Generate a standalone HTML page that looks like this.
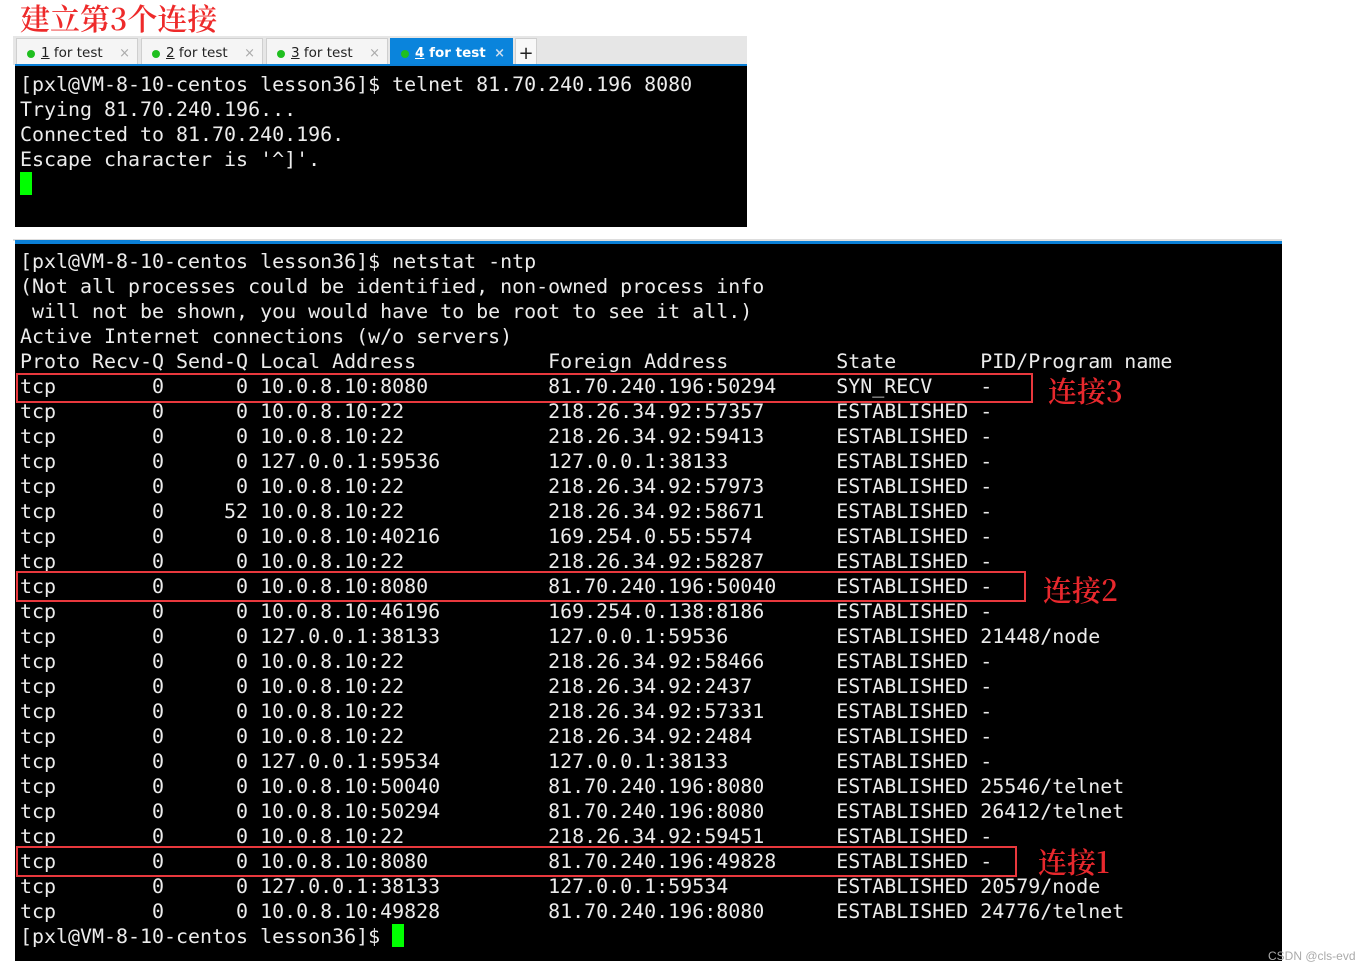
<!DOCTYPE html>
<html><head><meta charset="utf-8"><style>
body{margin:0;width:1372px;height:971px;background:#fff;position:relative;overflow:hidden}
.a{position:absolute}
pre{margin:0;font-family:"DejaVu Sans Mono",monospace;font-size:19.95px;line-height:25px;color:#ececec;white-space:pre}
.tab{position:absolute;top:38px;height:27px;background:#f5f5f5;border:1px solid #cfcfcf;border-bottom:none;box-sizing:border-box;font-family:"DejaVu Sans","Liberation Sans",sans-serif;font-size:13.5px;line-height:29px;color:#222}
.tab .d{position:absolute;left:10px;top:11px;width:8px;height:8px;border-radius:50%;background:#1fbf1f}
.tab .t{position:absolute;left:24px}
.tab .x{position:absolute;right:7px;color:#aaa;font-size:13px}
.red{position:absolute;border:2px solid #e8383d;box-sizing:border-box}
.ann{position:absolute;color:#e8282d;font-family:"Noto Serif CJK SC","Liberation Serif",serif;font-size:29px;line-height:32px;font-weight:600}
</style></head><body>
<div class="a" style="left:20px;top:-2px;color:#ee2a2a;font-family:'Noto Serif CJK SC','Liberation Serif',serif;font-size:30px;line-height:38px;font-weight:600">建立第3个连接</div>
<div class="a" style="left:13px;top:36px;width:734px;height:29px;background:#e6e6e6"></div>
<div class="tab" style="left:16px;width:122px"><span class="d"></span><span class="t"><u>1</u> for test</span><span class="x">×</span></div>
<div class="tab" style="left:141px;width:122px"><span class="d"></span><span class="t"><u>2</u> for test</span><span class="x">×</span></div>
<div class="tab" style="left:266px;width:122px"><span class="d"></span><span class="t"><u>3</u> for test</span><span class="x">×</span></div>
<div class="tab" style="left:390px;width:123px;background:#0a84dc;border-color:#0a84dc;color:#fff;font-weight:bold"><span class="d"></span><span class="t"><u>4</u> for test</span><span class="x" style="color:#cde">×</span></div>
<div class="tab" style="left:515px;width:22px;text-align:center;font-size:18px;background:#f8f8f8">+</div>
<div class="a" style="left:15px;top:64px;width:732px;height:2px;background:#0a7fd6"></div>
<div class="a" style="left:15px;top:66px;width:732px;height:161px;background:#000"></div>
<pre class="a" style="left:20px;top:72px">[pxl@VM-8-10-centos lesson36]$ telnet 81.70.240.196 8080
Trying 81.70.240.196...
Connected to 81.70.240.196.
Escape character is '^]'.</pre>
<div class="a" style="left:20px;top:172px;width:12px;height:23px;background:#00ff00"></div>

<div class="a" style="left:13px;top:239px;width:1269px;height:2px;background:#ddd"></div>
<div class="a" style="left:15px;top:240px;width:125px;height:2px;background:#0a7fd6"></div>
<div class="a" style="left:15px;top:241px;width:1267px;height:3px;background:#0a7fd6"></div>
<div class="a" style="left:15px;top:244px;width:1267px;height:717px;background:#000"></div>
<pre class="a" style="left:20px;top:249px">[pxl@VM-8-10-centos lesson36]$ netstat -ntp
(Not all processes could be identified, non-owned process info
 will not be shown, you would have to be root to see it all.)
Active Internet connections (w/o servers)
Proto Recv-Q Send-Q Local Address           Foreign Address         State       PID/Program name
tcp        0      0 10.0.8.10:8080          81.70.240.196:50294     SYN_RECV    -
tcp        0      0 10.0.8.10:22            218.26.34.92:57357      ESTABLISHED -
tcp        0      0 10.0.8.10:22            218.26.34.92:59413      ESTABLISHED -
tcp        0      0 127.0.0.1:59536         127.0.0.1:38133         ESTABLISHED -
tcp        0      0 10.0.8.10:22            218.26.34.92:57973      ESTABLISHED -
tcp        0     52 10.0.8.10:22            218.26.34.92:58671      ESTABLISHED -
tcp        0      0 10.0.8.10:40216         169.254.0.55:5574       ESTABLISHED -
tcp        0      0 10.0.8.10:22            218.26.34.92:58287      ESTABLISHED -
tcp        0      0 10.0.8.10:8080          81.70.240.196:50040     ESTABLISHED -
tcp        0      0 10.0.8.10:46196         169.254.0.138:8186      ESTABLISHED -
tcp        0      0 127.0.0.1:38133         127.0.0.1:59536         ESTABLISHED 21448/node
tcp        0      0 10.0.8.10:22            218.26.34.92:58466      ESTABLISHED -
tcp        0      0 10.0.8.10:22            218.26.34.92:2437       ESTABLISHED -
tcp        0      0 10.0.8.10:22            218.26.34.92:57331      ESTABLISHED -
tcp        0      0 10.0.8.10:22            218.26.34.92:2484       ESTABLISHED -
tcp        0      0 127.0.0.1:59534         127.0.0.1:38133         ESTABLISHED -
tcp        0      0 10.0.8.10:50040         81.70.240.196:8080      ESTABLISHED 25546/telnet
tcp        0      0 10.0.8.10:50294         81.70.240.196:8080      ESTABLISHED 26412/telnet
tcp        0      0 10.0.8.10:22            218.26.34.92:59451      ESTABLISHED -
tcp        0      0 10.0.8.10:8080          81.70.240.196:49828     ESTABLISHED -
tcp        0      0 127.0.0.1:38133         127.0.0.1:59534         ESTABLISHED 20579/node
tcp        0      0 10.0.8.10:49828         81.70.240.196:8080      ESTABLISHED 24776/telnet
[pxl@VM-8-10-centos lesson36]$</pre>
<div class="a" style="left:392px;top:924px;width:12px;height:23px;background:#00ff00"></div>
<div class="red" style="left:16px;top:373px;width:1017px;height:30px"></div>
<div class="red" style="left:16px;top:571px;width:1010px;height:31px"></div>
<div class="red" style="left:16px;top:846px;width:1001px;height:31px"></div>
<div class="ann" style="left:1048px;top:375px">连接3</div>
<div class="ann" style="left:1043px;top:574px">连接2</div>
<div class="ann" style="left:1038px;top:846px">连接1</div>
<div class="a" style="left:1268px;top:949px;font-family:'Liberation Sans',sans-serif;font-size:12px;color:#aaa">CSDN @cls-evd</div>
</body></html>
